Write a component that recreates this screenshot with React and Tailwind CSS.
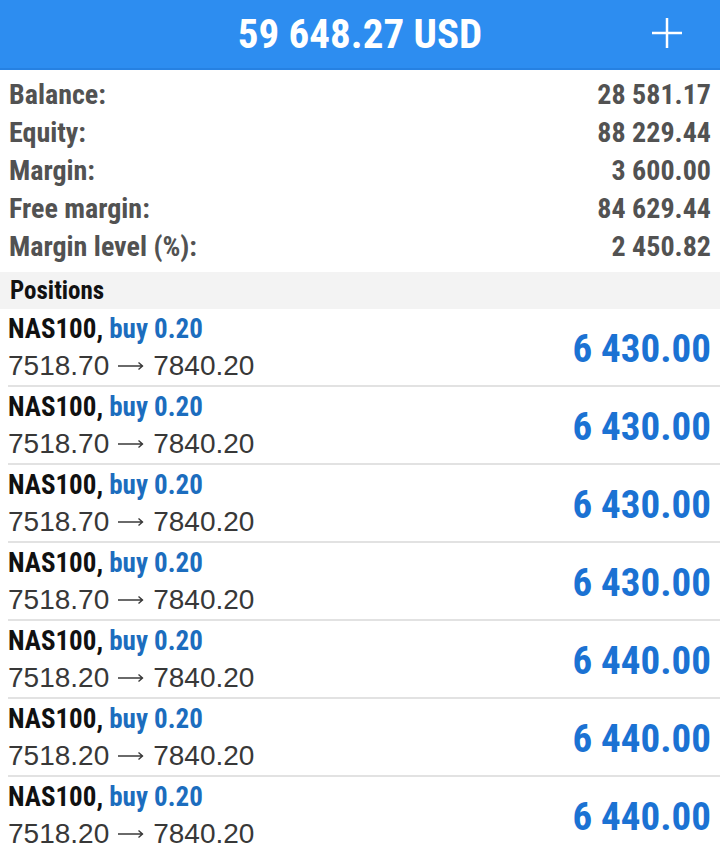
const summary = [
  ['Balance:', '28 581.17'],
  ['Equity:', '88 229.44'],
  ['Margin:', '3 600.00'],
  ['Free margin:', '84 629.44'],
  ['Margin level (%):', '2 450.82'],
];

const positions = [
  { open: '7518.70', close: '7840.20', profit: '6 430.00' },
  { open: '7518.70', close: '7840.20', profit: '6 430.00' },
  { open: '7518.70', close: '7840.20', profit: '6 430.00' },
  { open: '7518.70', close: '7840.20', profit: '6 430.00' },
  { open: '7518.20', close: '7840.20', profit: '6 440.00' },
  { open: '7518.20', close: '7840.20', profit: '6 440.00' },
  { open: '7518.20', close: '7840.20', profit: '6 440.00' },
];

const PlusIcon = () => (
  <svg width="32" height="32" viewBox="0 0 32 32" fill="none">
    <path d="M16 1v30M1 16h30" stroke="white" strokeWidth="2.5" />
  </svg>
);

// thin long arrow between open and current price
const Arrow = () => (
  <svg width="26" height="12" viewBox="0 0 26 12" fill="none">
    <path d="M0 6h25M20.5 2.5l4 3.5-4 3.5" stroke="#3a3a3a" strokeWidth="1.4" />
  </svg>
);

export default function App() {
  return (
    <div className="w-[720px] bg-white font-['Roboto_Condensed',Roboto,sans-serif]">
      {/* top bar */}
      <div className="relative flex h-[70px] items-center justify-center border-b-2 border-[#2681e2] bg-[#2d8df0]">
        <span className="text-[41px] font-bold leading-none text-white">59 648.27 USD</span>
        <div className="absolute right-[37px] top-[17px]">
          <PlusIcon />
        </div>
      </div>

      {/* account summary */}
      <div className="px-[9px] pt-[6px] pb-[6px]">
        {summary.map(([label, value]) => (
          <div key={label} className="flex h-[38px] items-center justify-between text-[28px] font-bold text-[#525252]">
            <span>{label}</span>
            <span>{value}</span>
          </div>
        ))}
      </div>

      <div className="flex h-[37px] items-center bg-[#f3f3f3] px-[10px] text-[25px] font-bold text-[#111]">
        Positions
      </div>

      {/* open positions */}
      <div>
        {positions.map((p, i) => (
          <div key={i} className="ml-2 flex h-[78px] justify-between border-b-2 border-[#e2e2e2] pr-[9px]">
            <div className="flex flex-col pt-[5px]">
              <div className="text-[27px] font-bold leading-[30px] text-[#111]">
                NAS100, <span className="text-[#1c6dbe]">buy 0.20</span>
              </div>
              <div className="mt-[2px] flex h-[40px] items-center font-['Liberation_Sans',Arial,sans-serif] text-[28px] text-[#383838]">
                <span>{p.open}</span>
                <span className="mx-[9px] flex items-center">
                  <Arrow />
                </span>
                <span>{p.close}</span>
              </div>
            </div>
            <div className="flex items-center pt-[4px] text-[39px] font-bold leading-none text-[#1b72d3]">{p.profit}</div>
          </div>
        ))}
      </div>
    </div>
  );
}
